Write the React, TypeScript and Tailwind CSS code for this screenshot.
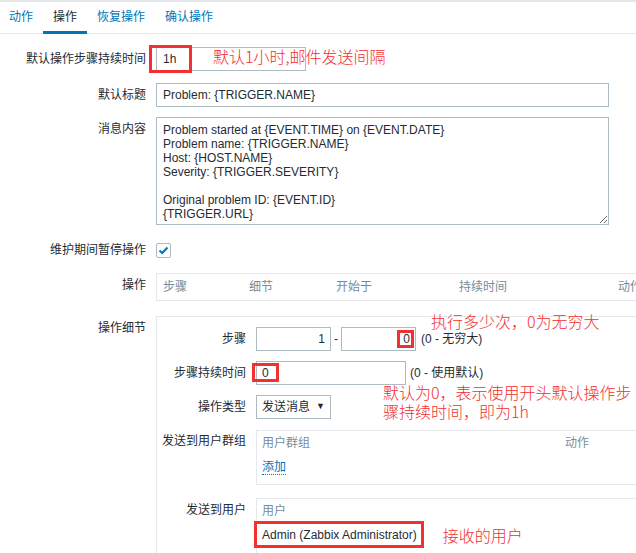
const NOTE = "font-['Noto_Sans_CJK_SC',sans-serif] font-light text-[16px] leading-[16px] text-[#f2302f] whitespace-nowrap";

function Tab({ label, active }: { label: string; active?: boolean }) {
    return (
        <div
            className={`h-[32px] px-[10px] leading-[30px] -mb-px ${active ? 'border-b-[3px] border-[#0275b8] text-[#1f2c33]' : 'text-[#0275b8]'}`}
        >
            {label}
        </div>
    );
}

function Row({ label, children, className = '' }: { label: string; children: React.ReactNode; className?: string }) {
    return (
        <div className={`flex items-start gap-[10px] ${className}`}>
            <div className="w-[146px] shrink-0 text-right leading-[24px]">{label}</div>
            {children}
        </div>
    );
}

function InnerRow({ label, children, className = '' }: { label: string; children: React.ReactNode; className?: string }) {
    return (
        <div className={`flex items-start gap-[10px] ${className}`}>
            <div className="w-[89px] shrink-0 text-right leading-[24px]">{label}</div>
            {children}
        </div>
    );
}

const message = `Problem started at {EVENT.TIME} on {EVENT.DATE}
Problem name: {TRIGGER.NAME}
Host: {HOST.NAME}
Severity: {TRIGGER.SEVERITY}

Original problem ID: {EVENT.ID}
{TRIGGER.URL}`;

export default function App() {
    return (
        <div className="w-[636px] h-[553px] overflow-hidden bg-white font-['Liberation_Sans','Noto_Sans_CJK_SC',sans-serif] text-[12px] text-[#1f2c33]">
            {/* Tabs */}
            <div className="flex h-[34px] border-t-2 border-b border-t-[#e4e7e9] border-b-[#e6e9eb] -ml-px">
                <Tab label="动作" />
                <Tab label="操作" active />
                <Tab label="恢复操作" />
                <Tab label="确认操作" />
            </div>

            <div className="pt-[13px]">
                <Row label="默认操作步骤持续时间">
                    <div className="relative h-[24px] w-[150px] border border-[#acbbc2] px-[6px] leading-[22px]">
                        1h
                        <span className="absolute left-[-8px] top-[-3px] h-[28px] w-[43px] border-[3px] border-[#f2302f]" />
                        <span className={`absolute left-[56px] top-0 ${NOTE}`}>默认1小时,邮件发送间隔</span>
                    </div>
                </Row>

                <Row label="默认标题" className="mt-[12px]">
                    <div className="h-[24px] w-[453px] border border-[#acbbc2] px-[6px] leading-[22px]">
                        Problem: {'{TRIGGER.NAME}'}
                    </div>
                </Row>

                <Row label="消息内容" className="mt-[10px]">
                    <textarea
                        readOnly
                        value={message}
                        className="h-[108px] w-[453px] overflow-hidden border border-[#acbbc2] px-[6px] pt-[5px] leading-[14px] outline-none"
                    />
                </Row>

                <Row label="维护期间暂停操作" className="mt-[13px]">
                    <div className="mt-[5px] flex h-[15px] w-[15px] items-center justify-center rounded-[2px] border border-[#acbbc2]">
                        <svg width="11" height="11" viewBox="0 0 11 11" fill="none">
                            <path d="M1.5 5.5 L4.2 8 L9.5 2.5" stroke="#0275b8" strokeWidth="2" />
                        </svg>
                    </div>
                </Row>

                <Row label="操作" className="mt-[11px]">
                    <div className="flex h-[28px] w-[520px] shrink-0 items-center border border-[#e6e9eb] pl-[6px] text-[#768d99]">
                        <span className="w-[86px]">步骤</span>
                        <span className="w-[87px]">细节</span>
                        <span className="w-[123px]">开始于</span>
                        <span className="w-[159px]">持续时间</span>
                        <span>动作</span>
                    </div>
                </Row>

                <Row label="操作细节" className="mt-[15px]">
                    <div className="relative h-[260px] w-[520px] shrink-0 border-l border-t border-[#e6e9eb] pt-[10px]">
                        <span className={`absolute left-[274px] top-[-4px] ${NOTE}`}>执行多少次，0为无穷大</span>
                        <span className={`absolute left-[226px] top-[66px] leading-[19px] ${NOTE}`}>
                            默认为0，表示使用开头默认操作步
                            <br />
                            骤持续时间，即为1h
                        </span>

                        <InnerRow label="步骤">
                            <div className="flex items-center">
                                <div className="h-[24px] w-[75px] border border-[#acbbc2] pr-[5px] text-right leading-[22px]">1</div>
                                <span className="mx-[3px]">-</span>
                                <div className="relative h-[24px] w-[75px] border border-[#acbbc2] pr-[5px] text-right leading-[22px]">
                                    0
                                    <span className="absolute left-[55px] top-[2px] h-[18px] w-[17px] border-[3px] border-[#f2302f]" />
                                </div>
                                <span className="ml-[5px]">(0 - 无穷大)</span>
                            </div>
                        </InnerRow>

                        <InnerRow label="步骤持续时间" className="mt-[10px]">
                            <div className="flex items-center">
                                <div className="relative h-[24px] w-[150px] border border-[#acbbc2] pl-[5px] leading-[22px]">
                                    0
                                    <span className="absolute left-[-5px] top-[1px] h-[19px] w-[27px] border-[3px] border-[#f2302f]" />
                                </div>
                                <span className="ml-[4px]">(0 - 使用默认)</span>
                            </div>
                        </InnerRow>

                        <InnerRow label="操作类型" className="mt-[10px]">
                            <div className="flex h-[24px] w-[75px] items-center justify-between border border-[#acbbc2] pl-[5px] pr-[5px]">
                                <span>发送消息</span>
                                <span className="text-[9px]">▼</span>
                            </div>
                        </InnerRow>

                        <InnerRow label="发送到用户群组" className="mt-[10px]">
                            <div className="mt-[1px] h-[55px] w-[420px] shrink-0 border-b border-l border-t border-[#e6e9eb] pl-[5px]">
                                <div className="flex leading-[24px] text-[#768d99]">
                                    <span className="w-[303px]">用户群组</span>
                                    <span>动作</span>
                                </div>
                                <div className="mt-[3px]">
                                    <span className="inline-block border-b border-dotted border-[#0275b8] leading-[14px] text-[#0275b8]">添加</span>
                                </div>
                            </div>
                        </InnerRow>

                        <InnerRow label="发送到用户" className="mt-[13px]">
                            <div className="h-[80px] w-[420px] shrink-0 border-l border-t border-[#e6e9eb] pl-[5px]">
                                <div className="leading-[24px] text-[#768d99]">用户</div>
                                <div className="flex items-center leading-[24px]">
                                    <span className="relative">
                                        Admin (Zabbix Administrator)
                                        <span className="absolute bottom-[-1px] left-[-8px] right-[-7px] top-[-2px] border-[3px] border-[#f2302f]" />
                                    </span>
                                    <span className={`ml-[26px] ${NOTE}`}>接收的用户</span>
                                </div>
                            </div>
                        </InnerRow>
                    </div>
                </Row>
            </div>
        </div>
    );
}
